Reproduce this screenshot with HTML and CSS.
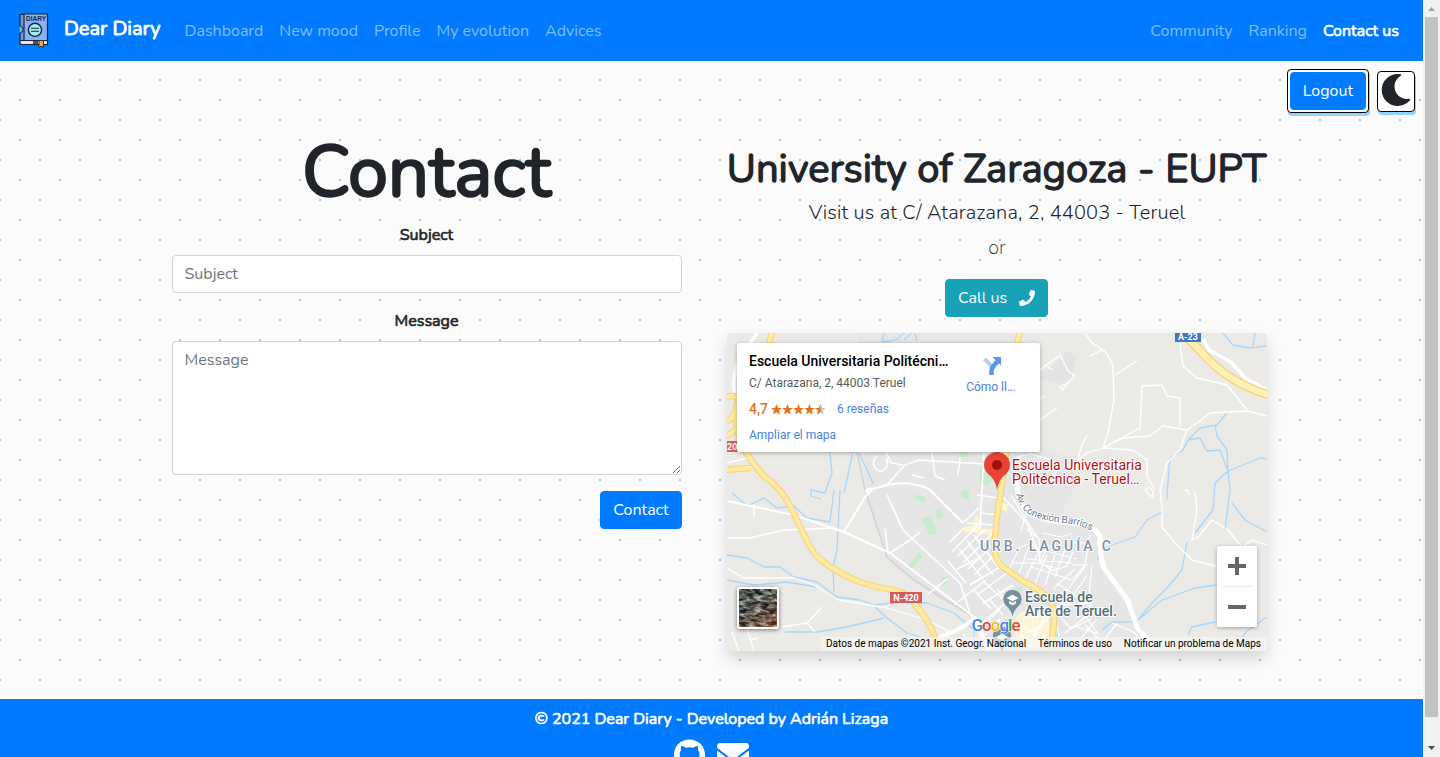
FILE: index.html
```
<!DOCTYPE html>
<html lang="en">
<head>
<meta charset="utf-8">
<title>Dear Diary - Contact us</title>
<link rel="stylesheet" href="styles.css">
</head>
<body>
<div class="page">
  <nav class="navbar">
    <a class="brand">
      <svg class="brand-logo" viewBox="0 0 30 36" width="30" height="36">
        <path d="M3 1h25.500v27H3z" fill="#8ab2f2" stroke="#16263f" stroke-width="1.200"/>
        <path d="M1 1.500h4v26H1z" fill="#6f9be6" stroke="#16263f" stroke-width="1.200"/>
        <path d="M1 27.500h27.500v4H3q-2 0-2-2z" fill="#e6e6f2" stroke="#16263f" stroke-width="1.200"/>
        <path d="M14 28h5v3h-5z" fill="#6b4348"/>
        <path d="M20 27.500h4.500v7l-2.200-1.600-2.300 1.600z" fill="#f0a93c" stroke="#3b2f2f"/>
        <path d="M.5 12.500q3.500 1 3.500 4t-3.500 4" fill="#7fb0f5" stroke="#16263f"/>
        <circle cx="16" cy="16.800" r="6.600" fill="#a7ecf3" stroke="#16263f" stroke-width="1.400"/>
        <path d="M12 15.300h8M12 18.300h8" stroke="#16263f" stroke-width="1.100"/>
        <text x="7" y="8" class="logo-word" textLength="20" lengthAdjust="spacingAndGlyphs">DIARY</text>
      </svg>
      <span class="brand-name faux">Dear Diary</span>
    </a>
    <div class="nav-links"><a>Dashboard</a><a>New mood</a><a>Profile</a><a>My evolution</a><a>Advices</a></div>
    <div class="nav-links nav-right"><a>Community</a><a>Ranking</a><a class="active faux">Contact us</a></div>
  </nav>

  <div class="tools">
    <div class="frame"><button class="btn">Logout</button></div>
    <button class="moon"><svg viewBox="0 0 512 512" width="32" height="32"><path fill="#212529" d="M283.211 512c78.962 0 151.079-35.925 198.857-94.792 7.068-8.708-.639-21.430-11.562-19.350-124.203 23.654-238.262-71.576-238.262-196.954 0-72.222 38.662-138.635 101.498-174.394 9.686-5.512 7.250-20.197-3.756-22.230A258.156 258.156 0 0 0 283.211 0c-141.309 0-256 114.511-256 256 0 141.309 114.511 256 256 256z"/></svg></button>
  </div>

  <main class="columns">
    <form class="contact">
      <h1 class="title">Contact</h1>
      <label class="faux">Subject</label>
      <input class="field" placeholder="Subject">
      <label class="faux">Message</label>
      <textarea class="field area" placeholder="Message"></textarea>
      <button class="btn send" type="button">Contact</button>
    </form>

    <section class="place">
      <h2 class="heading">University of Zaragoza - EUPT</h2>
      <p class="lead">Visit us at C/ Atarazana, 2, 44003 - Teruel</p>
      <p class="lead thin">or</p>
      <a class="btn call">Call us <svg viewBox="0 0 512 512" width="16" height="16"><path fill="#fff" d="M493.400 24.600l-104-24c-11.300-2.600-22.900 3.300-27.500 13.900l-48 112c-4.200 9.800-1.400 21.300 6.900 28l60.600 49.600c-36 76.700-98.900 140.500-177.200 177.200l-49.600-60.600c-6.800-8.300-18.200-11.100-28-6.900l-112 48C3.900 366.500-2 378.100.6 389.400l24 104C27.100 504.200 36.700 512 48 512c256.100 0 464-207.500 464-464 0-11.200-7.700-20.900-18.600-23.400z"/></svg></a>

      <div class="map">
        <svg class="map-canvas" viewBox="0 0 540 318" width="540" height="318">
          <rect width="540" height="318" fill="#ebeae7"/>
          <!-- built-up area -->
          <path fill="#e6e6e6" d="M130 0H292L300 110 345 125 350 150 335 180 370 196 378 235 400 262 418 318H262L240 282 200 258 165 232 140 165z"/>
          <path fill="#e4e4e6" d="M313 45l20-20 8-8 8 8-4 18-8 8-24-5z"/>
          <!-- parks -->
          <g fill="#c9ebcf">
            <path d="M253 134h15v12l-8 7-7-3zM232 119h9v5h-9zM234 157h8v10l-8-2zM189 161l11 4-3 5-10-4zM194 186l9-3 7 15-1 4-7-1zM208 177l5-2 4 9-7 2zM181 232l12-13 2 5-11 13zM214 245l6-2v9l-6 1z"/>
            <path d="M282 257l14-4-2 5-12 2zM326 290h5v14h-5z"/>
          </g>
          <!-- commercial blocks -->
          <path fill="#fdf3d5" d="M234 195l12-3 3-10 6 6-1 8 15 1-1 5-30-3zM270 168l11 3-1 7-10-2zM290 282l14-8 18 10v20l-12 14-18-6-6-16zM308 255l10 2 8 10-4 4z"/>
          <!-- water -->
          <g fill="none" stroke="#a9d7fb" stroke-width="1.300" stroke-linejoin="round">
            <path d="M0 222l20 3 17 9 16 0 14 10 23 5 20 15 23 3 14 5 30-3 23 1 27 10 20 17v21M0 247l27 5 33-3 30 5 20 11M113 157l-3 60-4 17 1 25M103 119l2 21-7 20-14-3v6l10 3M126 119l-9 41M132 120l14 30M5 160l15 13 17-8 13 10 17-2 13 12 23 4 4-32M148 274l12 11 20 15 13 4M58 299l32 0 30-5 37-9M157 0l-2 9 14-2 8-7M177 7l8-7M190 8l-2-8"/>
            <path d="M496 0l10 12 17 3 17-2M528 0l-2 13M500 80l-10 12-17 3-12 12-5 10-13 8-3 35M488 92l2 11 10 14 1 21 2 19-5 40M461 107l12-2 7 13 13-1 8 21-13 12-2 27-18 23M501 138l32-13 7 1M460 209l-5 28-14 17-16 16-14 17M375 297l10-8 20 0 6-2 24-20 33-12 22-3M435 179l-15 8-12 17-23 8-10 5-5 10M505 170l13 17 22 12M461 302l4-8 23-5M540 284l-19 13-6 7M440 157v10"/>
          </g>
          <!-- railway -->
          <path d="M130 119l8 38 22 67 27 23 56 35" fill="none" stroke="#d2d4d8" stroke-width="1.600"/>
          <!-- country tracks -->
          <g fill="none" stroke="#fff" stroke-width="1.300" stroke-linejoin="round">
            <path d="M358 0l7 10 15 10 6 13 1 34-6 33-5 15M410 28l-22 14M363 23l12-6M313 37l20-15 8 16 7 5-8 8-4 6-3-3 8-4M376 115l37-20 2-42 20-1 5 11 13 2 0 28M376 115l20-10 27-2 13-10 24 4 13-9 10-8 37-2 20 5M453 10l3 23 14 12 30 7 20 25M460 97l-7 20-13 13-7 27 2 18v19l13 16 17 17 23 6 12-9M351 127l9-7 16-5 30 2 14 10v16l8 14M360 102l-6 12-3 13M330 75l-17 12M318 63l-5 3M317 32l9 5M418 157q6-6 8 3t-8-3M456 158q6-3 6 4"/>
            <path d="M468 159l2 18-5 30 6-3 14-17 16 10 14 17 10-7 15 5M0 205l23 0 34-8 50-2M0 235l17 10 50 0 20 7 25 15 48 8 40 12 23 12M55 294l25-4 15-16M80 290l8 9M20 296l7 22M5 299l7 19M27 172v12M0 130l20-5 15-25M315 290l20-20M157 275l6-4M385 290l20 8 10 9M375 310l15-20M22 307l10-2"/>
          </g>
          <!-- streets -->
          <g fill="none" stroke="#fff" stroke-width="1.500" stroke-linejoin="round">
            <path d="M150 123a7 8 0 1 0 9 2M159 119l5 11 12 2M138 158l22-6 18-20 14-5 65 4M185 142l12 3M205 119l3 24 10 4M233 124l-2 18M160 162l16 35 57 53 10 30 17 38M163 220l20-13M257 119l-4 75M276 164l24 26 13 34M183 207l10-8M200 262l20-16M250 162l22 3M253 180l20 2M227 272l32-25M247 297l35-30M158 195l3 24"/>
            <path d="M252 175l-16 15M222 210l14-14M240 190l28 2M225 219l25-26M230 224l28-28M236 230l30-30M241 236l28-27M247 242l20-20M221 228l18 22M232 216l24 30M240 208l26 34M247 202l24 32M230 236l20-10M243 252l30-18M250 262l30-22M256 270l30-18M246 256l18 20M256 248l22 20"/>
          </g>
          <g fill="none" stroke="#fff" stroke-width="1.200" stroke-linejoin="round">
            <path d="M284 162l18 30 10 14M290 124l14-3 20 6 6 10-4 10-12 4-14-8M300 196l12 10 1 24M318 218l-4 12 12 8 14-5 6-14M281 238l12-24 12-4 9 10M292 240l10-26M285 230h26l20 6M298 246l12-24M308 250l12-28M318 252l10-30M328 244l10-28M304 234l44 14M300 226l46 4M312 216l38 10M326 256l22-20M338 260l20-26M346 246l12-14 5-30M340 272l20-30M330 250l36 24M318 262l20 10 26-2M352 258l14 20M344 210h16M345 232h16M365 232l-3 30M300 178l-6 20M315 200l20 4 10-4"/>
            <path d="M262 288l22-26M250 310l26-26M236 300l10 18M262 266l14 16M270 256l14 16M330 280l14 16 20-10M338 300l26-20M350 310l20-24M334 310l-6-24M356 280l16 22M296 288a10 8 0 1 0 20 4M300 300l20-12M290 300l28 16M304 278l6 38M318 282l-16 32M370 300l-20-6M262 300l10-14M210 318l10-20M358 292l22 22"/>
          </g>
          <!-- main local roads -->
          <g fill="none" stroke="#fff" stroke-linejoin="round">
            <path stroke-width="2" d="M0 168l67 14 50 17 46 21 67 51 17 13M117 199l21-35 7-7M140 160q-2-6 6-4l14-4q22-5 42 4l34 34"/>
            <path stroke-width="4" d="M208 305q24-6 40-20l14 33"/>
            <path stroke-width="5" d="M290 146q0 30 16 36t27 7q34 0 40 15 0 20 4 31 12 16 24 33 6 18 10 28l12 12"/>
            <path stroke-width="3.500" d="M8 63Q4 40 14 25L30 0M476 6l6 11 22 12 14 16 22 12"/>
          </g>
          <!-- highways -->
          <g fill="none" stroke-linejoin="round">
            <path stroke="#f7d57c" stroke-width="6.500" d="M45-2Q42 20 22 48 4 70 10 96 18 124 37 143q17 12 27 31 12 28 23 46 14 16 46 29 18 6 34 8 16 4 20 13 14 16 21 34l4 16M-2 64q16-4 14 8-8 16-12 16M-2 104l12-8M-2 137l26-2M293-2l-3 14M280 115l-5 35-5 34-3 32q2 12 9 18l20 14q16 8 24 16 10 10 6 34l-3 24"/>
            <path stroke="#ffeaa1" stroke-width="4.300" d="M45-2Q42 20 22 48 4 70 10 96 18 124 37 143q17 12 27 31 12 28 23 46 14 16 46 29 18 6 34 8 16 4 20 13 14 16 21 34l4 16M-2 64q16-4 14 8-8 16-12 16M-2 104l12-8M-2 137l26-2M293-2l-3 14M280 115l-5 35-5 34-3 32q2 12 9 18l20 14q16 8 24 16 10 10 6 34l-3 24"/>
            <path stroke="#f7cf69" stroke-width="9" d="M452-4q14 14 27 28 24 26 63 38"/>
            <path stroke="#fff0b3" stroke-width="6.600" d="M452-4q14 14 27 28 24 26 63 38"/>
          </g>
          <!-- road shields -->
          <g class="shield">
            <rect x="448" y="0" width="26" height="9" fill="#3f76c8"/><text x="461" y="7.300" text-anchor="middle">A-23</text>
            <rect x="163" y="259" width="32" height="11" fill="#d65c5c"/><text x="179" y="268" text-anchor="middle">N-420</text>
            <rect x="-10" y="108" width="24" height="11" fill="#d65c5c"/><text x="0" y="117">20</text>
          </g>
          <path id="avenue" d="M289 161Q293 179 308 184T338 190Q358 192 371 202" fill="none"/>
          <text class="street" textLength="89"><textPath href="#avenue">Av. Conexión Barrios</textPath></text>
          <text class="district" x="253" y="218" textLength="131">URB. LAGUÍA C</text>
          <!-- landmarks -->
          <g fill="#78909c" stroke="#fff" stroke-width=".6">
            <path d="M285.500 285q-1-7-6-11.500a9.600 9.600 0 1 1 12 0q-5 4.500-6 11.500z"/>
            <path d="M275 322q-1-8-6-11.500a9.600 9.600 0 1 1 12 0q-5 3.500-6 11.500z"/>
          </g>
          <path fill="#fff" d="M279.500 265l6-3.200 6 3.200-6 3.200zM282 268l3.500 1.800 3.500-1.800v2.600l-3.500 1.700-3.500-1.700zM269 304l6-3.200 6 3.200-6 3.200z"/>
          <text class="school" x="298" y="269">Escuela de</text>
          <text class="school" x="298" y="283">Arte de Teruel.</text>
          <path fill="#ea4335" d="M270 157q-1-8-6-13.500-7-5-7-11.500a13 13 0 1 1 26 0q0 6.500-7 11.500-5 5.500-6 13.500z"/>
          <circle cx="270" cy="132" r="5" fill="#a50e0e"/>
          <text class="poi" x="285" y="137">Escuela Universitaria</text>
          <text class="poi" x="285" y="151">Politécnica - Teruel…</text>
          <text class="google" x="244.500" y="297.500" textLength="49"><tspan fill="#4285f4">G</tspan><tspan fill="#ea4335">o</tspan><tspan fill="#fbbc05">o</tspan><tspan fill="#4285f4">g</tspan><tspan fill="#34a853">l</tspan><tspan fill="#ea4335">e</tspan></text>
        </svg>

        <div class="card">
          <div class="card-info">
            <strong>Escuela Universitaria Politécni…</strong>
            <span class="address">C/ Atarazana, 2, 44003 Teruel</span>
            <span class="rating"><b>4,7</b>
              <svg viewBox="0 0 55 11" width="55" height="11">
                <defs><path id="star" d="M5.500 0l1.500 3.900 4 .1-3.200 2.600 1.200 4-3.500-2.300-3.500 2.300 1.200-4L0 4l4-.1z"/></defs>
                <g fill="#e7711b"><use href="#star"/><use href="#star" x="11"/><use href="#star" x="22"/><use href="#star" x="33"/></g>
                <use href="#star" x="44" fill="#c8c8c8"/><path fill="#e7711b" d="M49.500 0v8.300L46 10.600l1.200-4L44 4l4-.1z"/>
              </svg>
              <a>6 reseñas</a></span>
            <a class="enlarge">Ampliar el mapa</a>
          </div>
          <div class="directions">
            <svg viewBox="0 0 18 18" width="18" height="18"><path d="M1.500 2l7 7" stroke="#b3d0f6" stroke-width="4"/><path d="M8.500 18v-4q0-3 2-5l4-4.500" fill="none" stroke="#5a97e6" stroke-width="4.600"/><path d="M9.500 0H18v8.500z" fill="#5a97e6"/></svg>
            <a>Cómo ll…</a>
          </div>
        </div>

        <svg class="satellite" viewBox="0 0 38 38" width="42" height="42">
          <filter id="ground" x="0" y="0" width="1" height="1" color-interpolation-filters="sRGB"><feTurbulence type="fractalNoise" baseFrequency=".13 .3" numOctaves="5" seed="21"/><feColorMatrix values="2 0 0 0 -.6  1.900 .1 0 0 -.62  1.800 0 .1 0 -.6  0 0 0 0 1"/></filter>
          <linearGradient id="soil" x1=".2" y1="0" x2=".8" y2="1"><stop offset=".3" stop-color="#2d4a4e" stop-opacity=".3"/><stop offset="1" stop-color="#b5583c" stop-opacity=".45"/></linearGradient>
          <rect width="38" height="38" filter="url(#ground)"/><rect width="38" height="38" fill="url(#soil)"/>
        </svg>

        <div class="zoom"><span class="plus"></span><hr><span class="minus"></span></div>
        <div class="legal"><span>Datos de mapas ©2021 Inst. Geogr. Nacional</span><span>Términos de uso</span><span>Notificar un problema de Maps</span></div>
      </div>
    </section>
  </main>

  <footer class="footer">
    <p class="faux">© 2021 Dear Diary - Developed by Adrián Lizaga</p>
    <div class="social">
      <svg viewBox="0 0 496 512" width="31" height="32"><path fill="#fff" d="M244.800 8C106.100 8 0 113.300 0 252c0 110.900 69.800 205.800 169.500 239.200 12.800 2.300 17.300-5.600 17.300-12.100 0-6.200-.3-40.400-.3-61.400 0 0-70 15-84.700-29.800 0 0-11.400-29.100-27.800-36.600 0 0-22.900-15.700 1.600-15.400 0 0 24.900 2 38.600 25.800 21.900 38.600 58.600 27.500 72.900 20.900 2.300-16 8.800-27.100 16-33.700-55.900-6.200-112.300-14.300-112.300-110.500 0-27.500 7.600-41.300 23.600-58.900-2.600-6.500-11.100-33.300 2.600-67.900 20.900-6.500 69 27 69 27 20-5.600 41.500-8.500 62.800-8.500s42.800 2.900 62.800 8.500c0 0 48.100-33.600 69-27 13.700 34.700 5.200 61.400 2.600 67.900 16 17.700 25.800 31.500 25.800 58.900 0 96.500-58.900 104.200-114.800 110.500 9.200 7.900 17 22.900 17 46.400 0 33.700-.3 75.400-.3 83.600 0 6.500 4.600 14.400 17.300 12.100C428.200 457.800 496 362.900 496 252 496 113.300 383.500 8 244.800 8z"/></svg>
      <svg viewBox="0 0 512 512" width="32" height="32"><path fill="#fff" d="M502.300 190.800c3.900-3.100 9.700-.2 9.700 4.700V400c0 26.500-21.500 48-48 48H48c-26.500 0-48-21.500-48-48V195.600c0-5 5.700-7.800 9.700-4.700 22.400 17.400 52.100 39.500 154.100 113.600 21.100 15.400 56.700 47.800 92.200 47.600 35.700.3 72-32.800 92.300-47.600 102-74.100 131.600-96.300 154-113.700zM256 320c23.200.4 56.600-29.200 73.400-41.400 132.700-96.300 142.800-104.700 173.400-128.700 5.800-4.500 9.200-11.500 9.200-18.900v-19c0-26.500-21.500-48-48-48H48c-26.500 0-48 21.500-48 48v19c0 7.400 3.400 14.300 9.200 18.900 30.600 23.900 40.700 32.400 173.400 128.700 16.800 12.200 50.200 41.800 73.400 41.400z"/></svg>
    </div>
  </footer>
</div>
<div class="scrollbar">
  <svg width="17" height="17"><path d="M5 11h7L8.500 7z" fill="#a3a3a3"/></svg>
  <div class="thumb"></div>
  <svg class="down" width="17" height="17"><path d="M5 6h7L8.500 10z" fill="#505050"/></svg>
</div>
</body>
</html>
```
FILE: styles.css
```
* { box-sizing: border-box; }

body {
  margin: 0;
  display: flex;
  height: 757px;
  overflow: hidden;
  font: 400 16px/24px Nunito, Lato, sans-serif;
  color: #212529;
}

h1, h2, p { margin: 0; }
svg { display: block; }

.page {
  width: 1423px;
  height: 757px;
  overflow: hidden;
  background:
    radial-gradient(circle, #9fc3ea 1.1px, transparent 1.1px) 0 0 / 40px 40px,
    radial-gradient(circle, #9fc3ea 1.1px, transparent 1.1px) 20px 20px / 40px 40px,
    #fbfbfb;
}

.faux { -webkit-text-stroke: 0.65px currentColor; }

.navbar {
  display: flex;
  align-items: center;
  height: 61px;
  padding: 0 24px 0 19px;
  background: #007bff;
  color: #fff;
}
.brand { display: flex; gap: 15px; margin-right: 24px; }
.brand-name { padding-top: 1px; font-size: 20px; line-height: 30px; -webkit-text-stroke-width: 0.85px; }
.logo-word { font: 700 7px "Liberation Sans", sans-serif; fill: #16263f; }
.nav-links { display: flex; gap: 16px; color: rgba(255, 255, 255, 0.5); }
.nav-right { margin-left: auto; }
.active { color: #fff; }

.tools {
  display: flex;
  justify-content: flex-end;
  align-items: flex-start;
  gap: 8px;
  height: 71px;
  padding: 8px 8px 0 0;
}
.frame, .moon {
  border: 1px solid #000;
  border-radius: 4px;
  background: #fff;
  box-shadow: 1px 3px 0 #90d3ff;
}
.frame { padding: 2px; }
.moon {
  display: flex;
  align-items: flex-start;
  width: 38px;
  height: 41px;
  margin-top: 2px;
  padding: 2px;
  overflow: hidden;
}

.btn {
  display: block;
  height: 38px;
  padding: 6px 12px;
  border: 1px solid #007bff;
  border-radius: 4px;
  background: #007bff;
  color: #fff;
  font: inherit;
}

.columns { display: flex; gap: 45px; height: 567px; padding-left: 172px; }

.contact { display: flex; flex-direction: column; width: 510px; }
.title {
  margin: -3px 0 8px;
  padding-right: 1px;
  font-size: 72px;
  font-weight: 400;
  line-height: 86px;
  text-align: center;
  -webkit-text-stroke: 2.400px #212529;
}
.contact label { margin-bottom: 8px; padding-right: 1px; text-align: center; }
.field {
  width: 100%;
  height: 38px;
  margin-bottom: 16px;
  padding: 6px 11.500px;
  border: 1px solid #ced4da;
  border-radius: 4px;
  background: #fff;
  font: inherit;
}
.field::placeholder { color: #6c757d; opacity: 1; }
.area { height: 134px; resize: vertical; }
.send { align-self: flex-end; width: 82px; }

.place { display: flex; flex-direction: column; align-items: center; width: 540px; padding-top: 13px; }
.heading {
  margin-bottom: 5px;
  padding-right: 1px;
  font-size: 40px;
  font-weight: 400;
  line-height: 48px;
  white-space: nowrap;
  -webkit-text-stroke: 1.300px #212529;
}
.lead { margin-bottom: 5px; font-size: 20px; font-weight: 300; line-height: 30px; letter-spacing: 0.150px; }
.thin { margin-bottom: 16px; font-weight: 200; }
.call { display: flex; align-items: center; gap: 12px; width: 103px; margin-right: 1px; border-color: #17a2b8; background: #17a2b8; white-space: nowrap; }
.call svg { flex: none; }

.map {
  position: relative;
  width: 540px;
  height: 318px;
  margin-top: 16px;
  border-radius: 4px;
  box-shadow: 0 8px 16px rgba(0, 0, 0, 0.15);
  font-family: Roboto, sans-serif;
}
.map-canvas { border-radius: 4px; }
.map text { font-family: Roboto, sans-serif; }
.shield text { font-size: 9px; font-weight: 700; fill: #fff; }
.street, .district, .school, .poi { paint-order: stroke; stroke: #fff; stroke-width: 2px; stroke-linejoin: round; }
.street { font-size: 10px; fill: #6b7683; }
.district { font-size: 14px; font-weight: 500; fill: #7c8ea8; }
.school { font-size: 14px; font-weight: 500; fill: #546e7a; }
.poi { font-size: 14px; fill: #b31412; }
.google { font-size: 17px; font-weight: 500; paint-order: stroke; stroke: #fff; stroke-width: 1px; }

.card {
  position: absolute;
  left: 10px;
  top: 10px;
  display: flex;
  justify-content: space-between;
  width: 303px;
  height: 109px;
  padding: 9px 25px 0 12px;
  border-radius: 2px;
  background: #fff;
  box-shadow: 0 1px 4px rgba(0, 0, 0, 0.3);
  font-size: 12px;
  line-height: 16px;
}
.card a { color: #4a80e4; }
.card-info { display: flex; flex-direction: column; }
.card strong { font-size: 14px; font-weight: 500; line-height: 18px; color: #000; white-space: nowrap; }
.address { margin: 5px 0 10px; color: #5b5b5b; }
.rating { display: flex; align-items: center; gap: 3px; height: 16px; margin-bottom: 10px; }
.rating b { font-size: 14px; font-weight: 500; color: #e7711b; }
.rating a { margin-left: 8px; }
.directions { display: flex; flex-direction: column; align-items: center; gap: 4px; padding-top: 5px; }
.directions svg { margin-left: 3px; }

.satellite {
  position: absolute;
  left: 10px;
  top: 254px;
  border: 2px solid #fff;
  border-radius: 3px;
  box-shadow: 0 1px 4px rgba(0, 0, 0, 0.5);
}

.zoom {
  position: absolute;
  right: 10px;
  top: 213px;
  display: flex;
  flex-direction: column;
  align-items: center;
  width: 40px;
  height: 81px;
  border-radius: 2px;
  background: #fff;
  box-shadow: 0 1px 4px rgba(0, 0, 0, 0.3);
}
.zoom hr { width: 30px; height: 1px; margin: 0; border: 0; background: #e6e6e6; }
.plus, .minus {
  width: 18px;
  height: 40px;
  background: linear-gradient(#666, #666) center / 18px 4px no-repeat;
}
.plus {
  background:
    linear-gradient(#666, #666) center / 18px 4px no-repeat,
    linear-gradient(#666, #666) center / 4px 18px no-repeat;
}

.legal {
  position: absolute;
  right: 0;
  bottom: 0;
  display: flex;
  justify-content: space-between;
  width: 446px;
  height: 14px;
  padding: 0 6px 0 5px;
  border-radius: 0 0 4px 0;
  background: rgba(245, 245, 245, 0.7);
  color: #000;
  font-size: 10px;
  line-height: 14px;
  white-space: nowrap;
}

.footer { height: 80px; padding-top: 8px; background: #007bff; color: #fff; text-align: center; }
.social { display: flex; justify-content: center; gap: 12px; margin-top: 8px; }

.scrollbar {
  display: flex;
  flex-direction: column;
  align-items: center;
  width: 17px;
  height: 757px;
  background: #f1f1f1;
}
.thumb { width: 13px; height: 700px; background: #c1c1c1; }
.down { margin-top: auto; }
```
